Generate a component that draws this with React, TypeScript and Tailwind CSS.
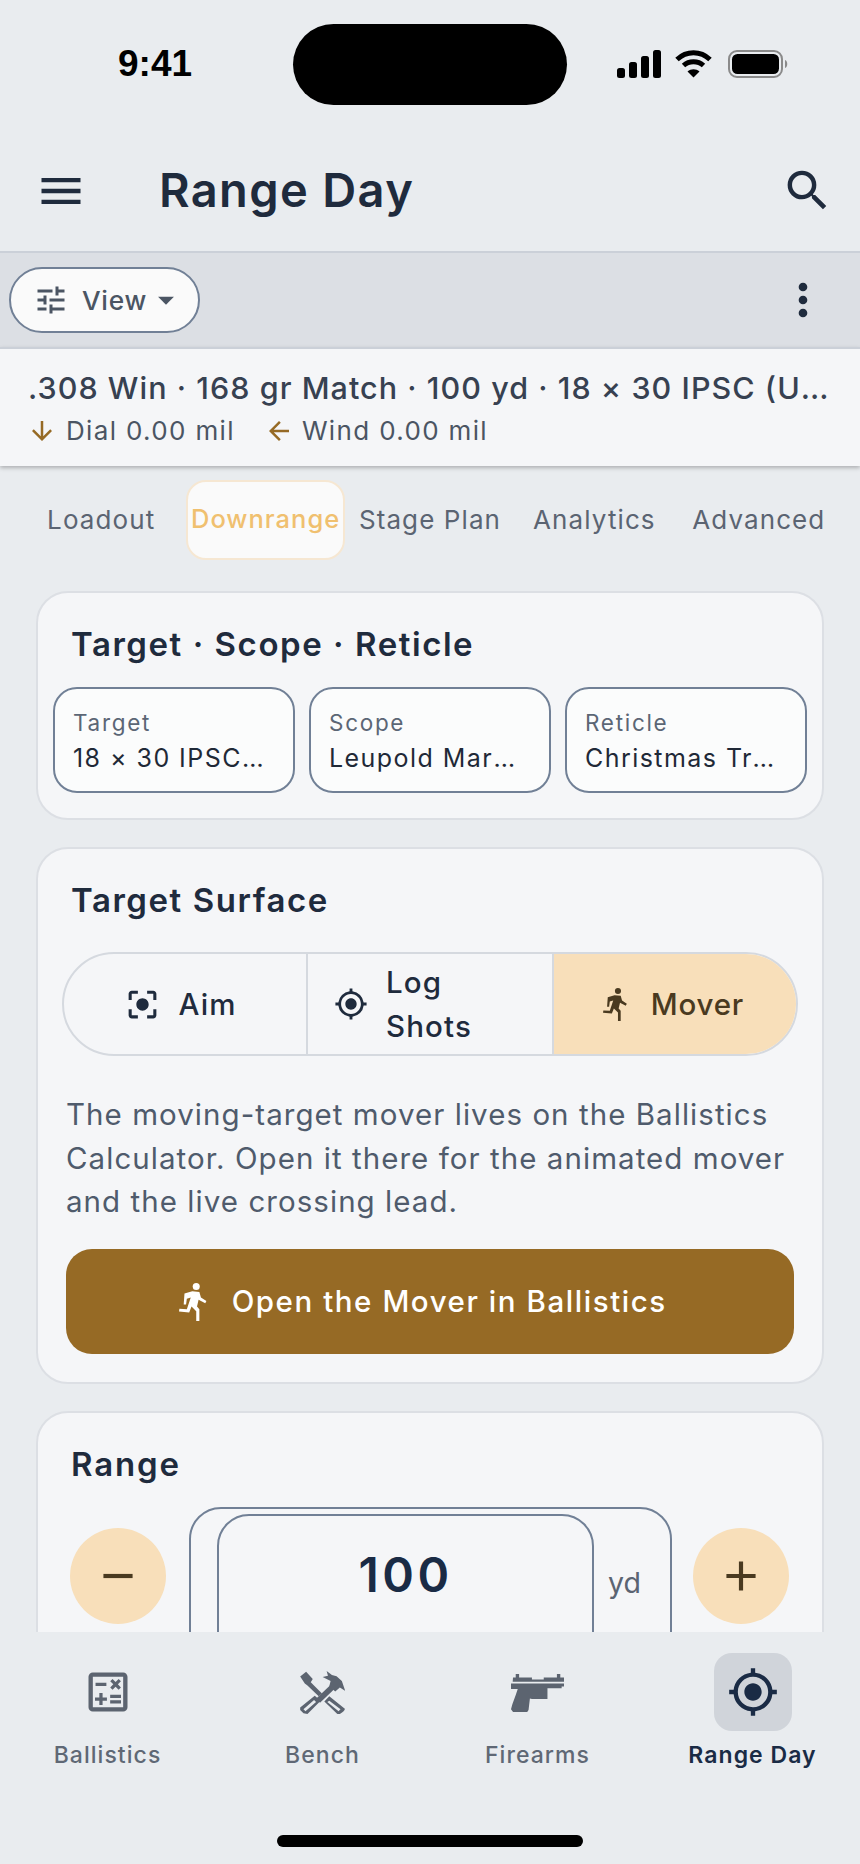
import React from "react";
import {
  MdMenu,
  MdSearch,
  MdTune,
  MdArrowDropDown,
  MdMoreVert,
  MdArrowDownward,
  MdArrowBack,
  MdCenterFocusStrong,
  MdGpsFixed,
  MdOutlineCalculate,
  MdRemove,
  MdAdd,
} from "react-icons/md";

function StatusIcons() {
  return (
    <div className="flex items-center gap-[14px]">
      <svg width="44" height="28" viewBox="0 0 44 28" fill="#000">
        <rect x="0" y="18" width="8" height="10" rx="2.5" />
        <rect x="12" y="12" width="8" height="16" rx="2.5" />
        <rect x="24" y="6" width="8" height="22" rx="2.5" />
        <rect x="36" y="0" width="8" height="28" rx="2.5" />
      </svg>
      <svg width="37" height="28" viewBox="0 0 37 28" fill="none" stroke="#000" strokeWidth="5">
        <path d="M2 9.5C11.5 0.5 25.5 0.5 35 9.5" />
        <path d="M8.5 15.5C14 10.5 23 10.5 28.5 15.5" />
        <path d="M18.5 27.5L12.5 21.5C16 18.5 21 18.5 24.5 21.5Z" fill="#000" stroke="none" />
      </svg>
      <svg width="60" height="28" viewBox="0 0 60 28" className="ml-[2px]">
        <rect x="1" y="1" width="53" height="26" rx="8" fill="none" stroke="#8a8a8a" strokeWidth="2" />
        <rect x="4" y="4" width="47" height="20" rx="5.5" fill="#000" />
        <path d="M57 10C60 11 60 17 57 18Z" fill="#8a8a8a" />
      </svg>
    </div>
  );
}

function RunIcon({ h }: { h: number }) {
  return (
    <svg width={(h * 70) / 97} height={h} viewBox="38 25 70 97" fill="currentColor" className="shrink-0">
      <circle cx="82" cy="34" r="9" />
      <path d="M52 52L72 46L90 48L94 62L108 71L105 77L88 68L84 85L90 92L90 122L82 122L82 97L70 85L64 100L38 98L39 91L58 92L68 62L58 65L56 80L50 80Z" />
    </svg>
  );
}

function BenchIcon() {
  return (
    <svg width="45" height="43" viewBox="30 28 135 130" fill="#5c6470">
      <path d="M30 45L48 30L68 52L62 62L96 96L86 104L52 72L44 66Z" />
      <path
        fillRule="evenodd"
        d="M118 104L165 142Q166 148 150 158Q144 160 140 156L103 120ZM118 118L112 122L146 150L152 144Z"
      />
      <path d="M120 72L132 84L90 124L78 112Z" />
      <path
        fillRule="evenodd"
        d="M74 103L92 118L52 158L40 156L30 146L30 138ZM72 116L40 144L46 150L78 122Z"
      />
      <path d="M98 46L114 42L110 28L126 40L140 44L156 58L166 88L150 78L136 90L118 74L122 58Z" />
    </svg>
  );
}

function PistolIcon() {
  return (
    <svg width="53" height="40" viewBox="0 0 157 118" fill="#5c6470">
      <path d="M6 16H14V6H24V16H62V22H97V16H136V6H146V16H157V29H5Z" />
      <path d="M0 34H157V43H150V48H108V80H62L56 78L52 112L48 118H6L0 110L4 95L14 68L20 50H0Z" />
    </svg>
  );
}

function NavItem({ label, icon, active }: { label: string; icon: React.ReactNode; active?: boolean }) {
  return (
    <div className="flex flex-col items-center">
      <div
        className={
          active
            ? "w-[78px] h-[78px] rounded-[18px] bg-[#d0d4da] flex items-center justify-center"
            : "w-[78px] h-[78px] rounded-[18px] flex items-center justify-center"
        }
      >
        {icon}
      </div>
      <div
        className={
          active
            ? "mt-[8px] text-[23px] leading-[32px] tracking-[1.05px] font-semibold text-[#1a2b45] whitespace-nowrap"
            : "mt-[8px] text-[23px] leading-[32px] tracking-[1.05px] font-medium text-[#5f6875] whitespace-nowrap"
        }
      >
        {label}
      </div>
    </div>
  );
}

function PickerPill({ label, value }: { label: string; value: string }) {
  return (
    <div className="h-[106px] rounded-[24px] border-2 border-[#718096] bg-[#fbfcfc] pl-[18px] pr-[24px] pt-[2px] flex flex-col justify-center min-w-0">
      <div className="text-[22.500px] leading-[32px] tracking-[1.7px] text-[#5b6675]">{label}</div>
      <div className="mt-[2px] text-[25px] leading-[35px] tracking-[1.45px] text-[#1f2937] truncate">{value}</div>
    </div>
  );
}

export default function App() {
  return (
    <div className="h-[1864px] w-[860px] bg-[#e9ecef] flex flex-col overflow-hidden font-['Inter',sans-serif]">
      {/* status bar */}
      <div className="h-[129px] shrink-0 flex items-start relative">
        <div className="absolute left-[293px] top-[24px] w-[274px] h-[81px] rounded-[41px] bg-black" />
        <div className="absolute left-[118px] top-[42px] text-[37px] leading-[44px] font-semibold text-black font-['Liberation_Sans',sans-serif]">
          9:41
        </div>
        <div className="absolute left-[617px] top-[50px]">
          <StatusIcons />
        </div>
      </div>

      {/* app bar */}
      <div className="h-[122px] shrink-0 flex items-center pl-[37px] pr-[26px] text-[#1f2b3d]">
        <MdMenu size={52} className="shrink-0 -ml-[2px] mt-[2px]" />
        <div className="ml-[72px] flex-1 text-[47px] leading-[56px] font-semibold tracking-[1.35px] text-[#1f2b3d]">
          Range Day
        </div>
        <MdSearch size={53} />
      </div>

      {/* toolbar */}
      <div className="h-[96px] shrink-0 bg-[#dcdfe4] border-t-2 border-[#cbd0d8] flex items-center justify-between pl-[9px] pr-[35px]">
        <div className="h-[66px] w-[191px] rounded-full bg-[#fafafa] border-2 border-[#718096] flex items-center pl-[22px]">
          <MdTune size={36} className="text-[#4b5563]" />
          <span className="ml-[13px] text-[26.300px] tracking-[0.7px] font-medium text-[#4b5563] mt-[2px]">View</span>
          <MdArrowDropDown size={38} className="ml-[0px] text-[#4b5563]" />
        </div>
        <MdMoreVert size={52} className="text-[#1f2b3d] -mr-[4px]" />
      </div>

      {/* summary */}
      <div className="h-[119px] shrink-0 bg-[#f5f6f8] border-t-2 border-[#cbd0d8] shadow-[0_2px_4px_rgba(0,0,0,0.25)] pl-[28px] pr-[24px] pt-[17px] relative z-10">
        <div className="text-[30.500px] leading-[44px] tracking-[1.05px] font-medium text-[#374151] truncate">
          .308 Win · 168 gr Match · 100 yd · 18 × 30 IPSC (USPSA) Steel
        </div>
        <div className="flex items-center text-[26px] leading-[38px] tracking-[1.35px] text-[#4b5563] mt-[2px]">
          <MdArrowDownward size={30} className="text-[#966a25] -ml-[1px]" />
          <span className="ml-[9px]">Dial 0.00 mil</span>
          <MdArrowBack size={30} className="text-[#966a25] ml-[29px]" />
          <span className="ml-[8px]">Wind 0.00 mil</span>
        </div>
      </div>

      {/* scrolling content */}
      <div className="flex-1 min-h-0 overflow-hidden">
        <div className="grid grid-cols-5 px-[19px] mt-[14px]">
          {["Loadout", "Downrange", "Stage Plan", "Analytics", "Advanced"].map((t) =>
            t === "Downrange" ? (
              <div
                key={t}
                className="h-[80px] mx-[3px] pb-[2px] rounded-[20px] bg-[#fafafa] border-2 border-[#f6e7d2] flex items-center justify-center text-[25.500px] tracking-[1px] font-medium text-[#f0c06f] whitespace-nowrap"
              >
                {t}
              </div>
            ) : (
              <div
                key={t}
                className="h-[80px] pb-[2px] flex items-center justify-center text-[26px] tracking-[1.1px] text-[#5b6472] whitespace-nowrap"
              >
                {t}
              </div>
            )
          )}
        </div>

        <div className="mx-[36px] mt-[31px] flex flex-col gap-[27px]">
          {/* Card 1 */}
          <div className="h-[229px] rounded-[32px] border-2 border-[#dcdfe4] bg-[#f5f6f8] px-[15px] pt-[29px]">
            <div className="ml-[18px] text-[33px] leading-[44px] tracking-[1.55px] font-semibold text-[#1f2b3d]">
              Target · Scope · Reticle
            </div>
            <div className="grid grid-cols-3 gap-[14px] mt-[21px]">
              <PickerPill label="Target" value="18 × 30 IPSC (USPSA)" />
              <PickerPill label="Scope" value="Leupold Mark 5HD" />
              <PickerPill label="Reticle" value="Christmas Tree Mil" />
            </div>
          </div>

          {/* Card 2 */}
          <div className="h-[537px] rounded-[32px] border-2 border-[#dcdfe4] bg-[#f5f6f8] px-[28px] pt-[29px]">
            <div className="ml-[5px] text-[33px] leading-[44px] tracking-[1.55px] font-semibold text-[#1f2b3d]">
              Target Surface
            </div>
            <div className="grid grid-cols-[244px_246px_1fr] -mx-[4px] mt-[30px] h-[104px] rounded-full border-2 border-[#d5d9df] overflow-hidden">
              <div className="flex items-center justify-center gap-[18px] border-r-2 border-[#d5d9df] text-[#1f2b3d] pr-[10px]">
                <MdCenterFocusStrong size={37} />
                <span className="text-[29.500px] tracking-[1.05px] font-medium">Aim</span>
              </div>
              <div className="flex items-center justify-center gap-[18px] border-r-2 border-[#d5d9df] text-[#1f2b3d] pr-[3px]">
                <MdGpsFixed size={34} />
                <span className="w-[137px] text-[29.500px] leading-[44px] tracking-[1.15px] font-medium">Log Shots</span>
              </div>
              <div className="flex items-center justify-center gap-[24px] bg-[#f8dfba] text-[#4a3a20] pr-[3px]">
                <RunIcon h={33} />
                <span className="text-[29.500px] tracking-[0.8px] font-medium">Mover</span>
              </div>
            </div>
            <p className="mt-[37px] text-[29.500px] leading-[43.700px] tracking-[1.05px] text-[#4f5b6c]">
              The moving-target mover lives on the Ballistics Calculator. Open it there for the animated mover and the live crossing lead.
            </p>
            <div className="mt-[25px] h-[105px] rounded-[26px] bg-[#966a25] flex items-center justify-center gap-[25px] pr-[14px] text-white">
              <RunIcon h={38} />
              <span className="text-[29.500px] tracking-[1.55px] font-medium">Open the Mover in Ballistics</span>
            </div>
          </div>

          {/* Card 3 */}
          <div className="h-[400px] rounded-[32px] border-2 border-[#dcdfe4] bg-[#f5f6f8] px-[32px] pt-[29px]">
            <div className="text-[33px] leading-[44px] tracking-[1.85px] font-semibold text-[#1f2b3d] ml-[1px]">Range</div>
            <div className="flex items-start mt-[21px]">
              <div className="mt-[21px] w-[96px] h-[96px] rounded-full bg-[#f8dfba] flex items-center justify-center text-[#4a3a20] shrink-0">
                <MdRemove size={50} />
              </div>
              <div className="ml-[23px] w-[483px] h-[200px] rounded-[32px] border-2 border-[#718096] flex items-start pl-[26px] pt-[5px] shrink-0">
                <div className="w-[377px] h-[180px] rounded-[32px] border-2 border-[#718096] flex items-start justify-center pt-[29px] text-[48px] leading-[60px] tracking-[3.500px] font-semibold text-[#1a2b45]">
                  100
                </div>
                <div className="ml-[14px] mt-[47px] text-[28.500px] leading-[44px] text-[#5b6472]">yd</div>
              </div>
              <div className="ml-[21px] mt-[21px] w-[96px] h-[96px] rounded-full bg-[#f8dfba] flex items-center justify-center text-[#4a3a20] shrink-0">
                <MdAdd size={50} />
              </div>
            </div>
          </div>
        </div>
      </div>

      {/* bottom nav */}
      <div className="h-[232px] shrink-0 bg-[#e9ecef] relative z-10">
        <div className="grid grid-cols-4 pt-[21px]">
          <NavItem label="Ballistics" icon={<MdOutlineCalculate size={52} className="text-[#5c6470]" />} />
          <NavItem label="Bench" icon={<BenchIcon />} />
          <NavItem label="Firearms" icon={<PistolIcon />} />
          <NavItem label="Range Day" active icon={<MdGpsFixed size={52} className="text-[#1a2b45]" />} />
        </div>
        <div className="absolute left-[277px] top-[203px] w-[306px] h-[12px] rounded-full bg-black" />
      </div>
    </div>
  );
}
